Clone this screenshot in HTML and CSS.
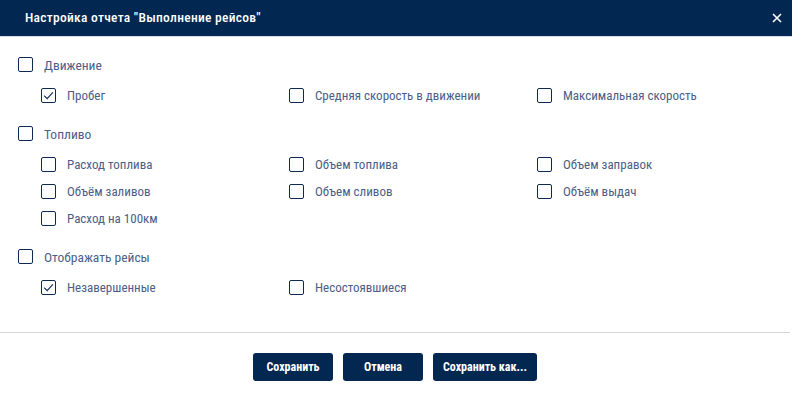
FILE: index.html
```html
<!DOCTYPE html>
<html lang="ru">
<head>
<meta charset="utf-8">
<link rel="stylesheet" href="styles.css">
</head>
<body>
<div class="dialog">
  <div class="header">
    <div class="title">Настройка отчета "Выполнение рейсов"</div>
    <button class="close" aria-label="Закрыть">
      <svg width="10" height="10" viewBox="0 0 10 10"><path d="M1 1L9 9M9 1L1 9" stroke="#fff" stroke-width="1.6" fill="none"/></svg>
    </button>
  </div>
  <div class="content">
    <div class="group">
      <label class="row head"><span class="box"></span><span class="text">Движение</span></label>
      <div class="items">
        <label class="row"><span class="box checked"><svg viewBox="0 0 14 14"><path d="M2.3 7.2L5.5 10.4L11.7 3.6"/></svg></span><span class="text">Пробег</span></label>
        <label class="row"><span class="box"></span><span class="text">Средняя скорость в движении</span></label>
        <label class="row"><span class="box"></span><span class="text">Максимальная скорость</span></label>
      </div>
    </div>
    <div class="group">
      <label class="row head"><span class="box"></span><span class="text">Топливо</span></label>
      <div class="items">
        <label class="row"><span class="box"></span><span class="text">Расход топлива</span></label>
        <label class="row"><span class="box"></span><span class="text">Объем топлива</span></label>
        <label class="row"><span class="box"></span><span class="text">Объем заправок</span></label>
        <label class="row"><span class="box"></span><span class="text">Объём заливов</span></label>
        <label class="row"><span class="box"></span><span class="text">Объем сливов</span></label>
        <label class="row"><span class="box"></span><span class="text">Объём выдач</span></label>
        <label class="row"><span class="box"></span><span class="text">Расход на 100км</span></label>
      </div>
    </div>
    <div class="group">
      <label class="row head"><span class="box"></span><span class="text">Отображать рейсы</span></label>
      <div class="items">
        <label class="row"><span class="box checked"><svg viewBox="0 0 14 14"><path d="M2.3 7.2L5.5 10.4L11.7 3.6"/></svg></span><span class="text">Незавершенные</span></label>
        <label class="row"><span class="box"></span><span class="text">Несостоявшиеся</span></label>
      </div>
    </div>
  </div>
  <div class="footer">
    <button class="btn">Сохранить</button>
    <button class="btn">Отмена</button>
    <button class="btn">Сохранить как...</button>
  </div>
</div>
</body>
</html>
```
FILE: styles.css
```css
* { box-sizing: border-box; }
html, body { margin: 0; padding: 0; background: #fff; }
body { font-family: Roboto, "Liberation Sans", sans-serif; font-stretch: 87.5%; }
.dialog {
  width: 792px;
  height: 396px;
  display: flex;
  flex-direction: column;
  background: #fff;
}
.header {
  height: 37px;
  flex: none;
  background: #022751;
  border-bottom: 1px solid #d9dce2;
  display: flex;
  align-items: center;
  justify-content: space-between;
  padding: 0 5px 2px 25px;
}
.title {
  color: #fff;
  font-size: 13.5px;
  letter-spacing: 0.28px;
  font-weight: 500;
}
.close {
  width: 20px;
  height: 20px;
  border: 0;
  background: transparent;
  padding: 0;
  display: flex;
  align-items: center;
  justify-content: center;
  margin-top: 1px;
}
.content {
  flex: 1;
  padding: 14px 0 0 18px;
}
.group { margin-bottom: 11px; }
.row {
  display: flex;
  align-items: center;
  height: 27px;
  color: #4b5e88;
  font-size: 13px;
}
.row.head { margin-bottom: 4px; font-size: 13.5px; }
.box {
  width: 15px;
  height: 15px;
  border: 1.5px solid #0c2a52;
  border-radius: 2px;
  flex: none;
  margin-right: 11px;
  display: flex;
}
.box svg { width: 100%; height: 100%; }
.box svg path { fill: none; stroke: #0c2a52; stroke-width: 1.2; }
.items {
  display: grid;
  grid-template-columns: 248px 248px 248px;
  padding-left: 23px;
}
.footer {
  flex: none;
  height: 64px;
  border-top: 1px solid #d6d6d6;
  margin-right: 2px;
  display: flex;
  justify-content: center;
  align-items: flex-start;
  gap: 10px;
  padding-top: 20px;
}
.btn {
  height: 28px;
  min-width: 80px;
  padding: 0 10px;
  background: #022751;
  color: #fff;
  border: 0;
  border-radius: 3px;
  font-family: Roboto, "Liberation Sans", sans-serif;
  font-stretch: 87.5%;
  font-size: 12px;
  font-weight: 700;
}
```
